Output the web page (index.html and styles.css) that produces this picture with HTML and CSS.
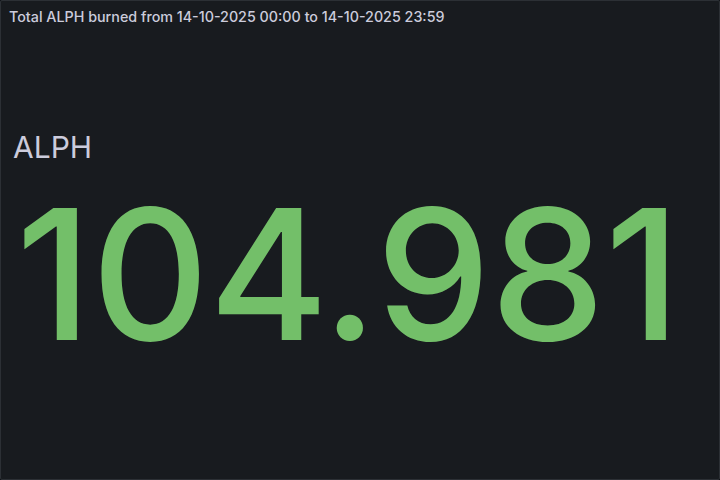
FILE: index.html
```html
<!DOCTYPE html>
<html>
<head>
<meta charset="utf-8">
<link rel="stylesheet" href="styles.css">
</head>
<body>
<div class="panel">
  <div class="header"><h2 class="title">Total ALPH burned from 14-10-2025 00:00 to 14-10-2025 23:59</h2></div>
  <div class="content">
    <div class="stat">
      <div class="name">ALPH</div>
      <div class="value">104.981</div>
    </div>
  </div>
</div>
</body>
</html>
```
FILE: styles.css
```css
html, body { margin: 0; padding: 0; background: #111217; }
body { font-family: Inter, "Noto Sans", sans-serif; }
.panel {
  box-sizing: border-box;
  width: 720px; height: 480px;
  background: #181b1f;
  border: 1px solid #2c3035;
  border-radius: 2px;
  display: flex; flex-direction: column;
}
.header { height: 32px; display: flex; align-items: center; padding: 0 8px; }
.title { margin: 0; font-size: 14.3px; font-weight: 500; color: #ccccdc; line-height: 22px; }
.content { flex: 1; display: flex; align-items: center; padding: 0 12px; }
.stat { display: flex; flex-direction: column; }
.name { font-size: 30px; color: #ccccdc; line-height: 1.2; }
.value { font-size: 182px; font-weight: 500; color: #73bf69; line-height: 1.2; padding-left: 3px; }
```
